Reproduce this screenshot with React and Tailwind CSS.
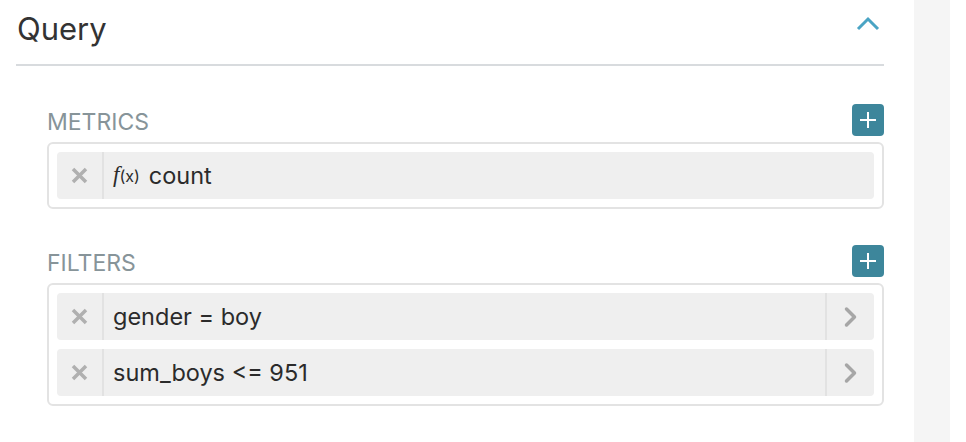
import React from 'react';

const font = { fontFamily: 'Inter, "Noto Sans", sans-serif' };

const XIcon = () => (
  <svg width="17" height="17" viewBox="0 0 17 17" fill="none">
    <path d="M2 2L15 15M15 2L2 15" stroke="#b0b0b0" strokeWidth="3.5" />
  </svg>
);

const PlusButton = () => (
  <button className="flex h-8 w-8 items-center justify-center rounded-[4px] bg-[#3d869b]">
    <svg width="18" height="18" viewBox="0 0 18 18" fill="none">
      <path d="M9 1V17M1 9H17" stroke="#ffffff" strokeWidth="2" />
    </svg>
  </button>
);

const Item = ({ children, arrow }) => (
  <div className="flex h-[47px] items-stretch rounded-[4px] bg-[#efefef]">
    <div className="flex w-[47px] items-center justify-center border-r-2 border-[#e2e2e2]">
      <XIcon />
    </div>
    <div className="flex flex-1 items-center pl-[9px] text-[23.5px] text-[#2b2b2b]">{children}</div>
    {arrow && (
      <div className="flex w-[49px] items-center justify-center border-l-2 border-[#e2e2e2]">
        <svg width="16" height="22" viewBox="0 0 16 22" fill="none">
          <path d="M3.5 3L11.5 11L3.5 19" stroke="#a6a6a6" strokeWidth="3.5" strokeLinecap="round" strokeLinejoin="round" />
        </svg>
      </div>
    )}
  </div>
);

const Section = ({ label, children }) => (
  <div className="ml-[31px]">
    <div className="flex h-8 items-center justify-between">
      <span className="translate-y-[2px] text-[23px] leading-none text-[#879499]">{label}</span>
      <PlusButton />
    </div>
    <div className="mt-[6px] flex flex-col gap-[9px] rounded-[6px] border-2 border-[#e3e3e3] p-2">
      {children}
    </div>
  </div>
);

export default function App() {
  return (
    <div className="flex h-[442px] w-[966px] bg-white" style={font}>
      <div className="w-[914px] pl-4 pr-[30px]">
        <div className="flex h-[66px] items-center justify-between border-b-2 border-[#d8dbde]">
          <h1 className="pb-[6px] pl-[1px] text-[31px] text-[#333333]">Query</h1>
          <svg className="mr-[3px] mb-[16px]" width="26" height="16" viewBox="0 0 26 16" fill="none">
            <path d="M3 13L13 3L23 13" stroke="#4aa4c4" strokeWidth="3" />
          </svg>
        </div>
        <div className="mt-[38px]">
          <Section label="METRICS">
            <Item>
              <span className="mr-[9px] flex items-baseline">
                <span className="text-[23px] italic" style={{ fontFamily: '"Liberation Serif", serif' }}>f</span>
                <span className="text-[16px]">(x)</span>
              </span>
              count
            </Item>
          </Section>
        </div>
        <div className="mt-[36px]">
          <Section label="FILTERS">
            <Item arrow>gender = boy</Item>
            <Item arrow>sum_boys &lt;= 951</Item>
          </Section>
        </div>
      </div>
      <div className="w-9 bg-[#f5f5f5]" />
    </div>
  );
}
